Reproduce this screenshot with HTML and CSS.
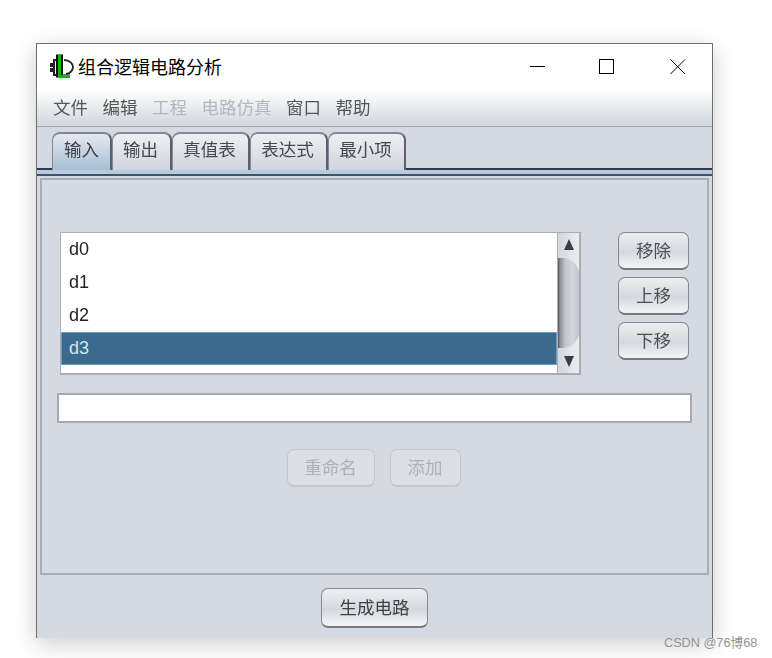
FILE: index.html
```html
<!DOCTYPE html>
<html lang="zh">
<head>
<meta charset="utf-8">
<title>组合逻辑电路分析</title>
<link rel="stylesheet" href="styles.css">
</head>
<body>
<div class="window">
  <header class="titlebar">
    <svg class="appicon" width="24" height="25" viewBox="0 0 24 25">
      <path d="M7 6H4V10H0V12H4V15H0V17H4V21H7" fill="none" stroke="#222" stroke-width="2"/>
      <path d="M14 6C20 6 23 10 23 13C23 16 20 20 16 20" fill="none" stroke="#222" stroke-width="1.800"/>
      <path d="M7 0.500V23.500" stroke="#111" stroke-width="2" fill="none"/>
      <path d="M10 0.500H13V20.500H20V24H8V0.500Z" fill="#111"/>
      <path d="M9.500 1V22.500H20" fill="none" stroke="#00c000" stroke-width="3"/>
    </svg>
    <span class="apptitle">组合逻辑电路分析</span>
    <div class="controls">
      <svg width="16" height="16" viewBox="0 0 16 16"><path d="M0 7.500H15" stroke="#000" fill="none"/></svg>
      <svg width="16" height="16" viewBox="0 0 16 16"><rect x="0.500" y="0.500" width="14" height="14" stroke="#000" fill="none"/></svg>
      <svg class="close" width="16" height="16" viewBox="0 0 16 16"><path d="M0.500 0.500L15 15M15 0.500L0.500 15" stroke="#000" fill="none"/></svg>
    </div>
  </header>
  <nav class="menubar">
    <span class="menu">文件</span>
    <span class="menu">编辑</span>
    <span class="menu off">工程</span>
    <span class="menu off">电路仿真</span>
    <span class="menu">窗口</span>
    <span class="menu">帮助</span>
  </nav>
  <div class="tabs">
    <span class="tab current"><span class="label">输入</span></span>
    <span class="tab t1"><span class="label">输出</span></span>
    <span class="tab t2"><span class="label">真值表</span></span>
    <span class="tab t2"><span class="label">表达式</span></span>
    <span class="tab t2"><span class="label">最小项</span></span>
  </div>
  <div class="strip"></div>
  <main class="panel">
    <div class="listrow">
      <div class="list">
        <ul class="rows">
          <li class="row">d0</li>
          <li class="row">d1</li>
          <li class="row">d2</li>
          <li class="row selected">d3</li>
        </ul>
        <div class="scroll">
          <span class="arrow up"></span>
          <span class="thumb"></span>
          <span class="arrow down"></span>
        </div>
      </div>
      <div class="side">
        <button class="btn side-btn"><span class="label">移除</span></button>
        <button class="btn side-btn"><span class="label">上移</span></button>
        <button class="btn side-btn"><span class="label">下移</span></button>
      </div>
    </div>
    <input class="field" type="text" aria-label="名称">
    <div class="actions">
      <button class="btn disabled rename"><span class="label">重命名</span></button>
      <button class="btn disabled add"><span class="label">添加</span></button>
    </div>
  </main>
  <footer class="footer">
    <button class="btn build"><span class="label">生成电路</span></button>
  </footer>
</div>
<div class="watermark">CSDN @76博68</div>
</body>
</html>
```

FILE: styles.css
```css
* { box-sizing: border-box; }
html, body { margin: 0; padding: 0; background: #fff; }
body {
  width: 772px;
  height: 658px;
  padding: 43px 0 0 36px;
  overflow: hidden;
  position: relative;
  font-family: "Noto Sans CJK SC", "Liberation Sans", sans-serif;
}
.window {
  width: 677px;
  height: 595px;
  background: #d5d9e1;
  border: 1px solid #6e6e6e;
  border-bottom: 0;
  box-shadow: 0 6px 22px rgba(0, 0, 0, .2);
}
.titlebar {
  height: 47px;
  background: #fff;
  display: flex;
  align-items: center;
  padding: 0 0 2px 13px;
}
.appicon { flex: none; }
.apptitle {
  margin-left: 4px;
  font-size: 18px;
  color: #000;
  line-height: 24px;
  padding-bottom: 2px;
}
.controls {
  margin-left: auto;
  display: flex;
  gap: 53px;
  padding-right: 26px;
}
.controls svg { display: block; }
.controls .close { margin-left: 2px; }
.menubar {
  height: 36px;
  background: linear-gradient(#fbfcfb 0%, #f3f4f4 25%, #d5d9e1 90%);
  border-bottom: 1px solid #a5a8b0;
  display: flex;
  align-items: center;
  padding: 0 0 4px 16px;
  gap: 14.500px;
}
.menu {
  font-size: 17.500px;
  color: #55565a;
  filter: blur(.45px);
}
.menu.off { color: #b4b7bd; }
.tabs {
  display: flex;
  padding: 5px 0 0 15px;
  height: 43px;
  margin-bottom: -2px;
  position: relative;
  z-index: 1;
}
.tab {
  height: 38px;
  border: 2px solid #59606f;
  border-color: #80889a #59606f transparent #80889a;
  border-left-width: 1px;
  border-bottom: 0;
  border-radius: 8px 8px 0 0;
  background: linear-gradient(#eeeff2, #d2d4dc);
  text-align: center;
  padding-right: 2px;
  font-size: 17.500px;
  line-height: 30px;
  color: #47484c;
}
.label { display: inline-block; filter: blur(.45px); }
.tab.t1 { width: 60px; }
.tab.t2 { width: 78px; }
.tab.current {
  width: 60px;
  padding-right: 0;
  background: linear-gradient(#e3e6ec 5%, #a9c0d5 95%);
  color: #3c4048;
}
.strip {
  height: 8px;
  background: #b4cbe0;
  border-top: 2px solid #333a4c;
  border-bottom: 2px solid #4a5063;
}
.panel {
  margin: 2px 3px 0;
  height: 397px;
  border: 2px solid #a9adb7;
  padding: 52px 15px 0;
}
.listrow {
  display: flex;
  padding: 0 3px;
  gap: 37px;
}
.list {
  width: 521px;
  height: 143px;
  display: flex;
  background: #fff;
  border: 2px solid #a9adb7;
  border-width: 1px 2px 2px 1px;
}
.rows {
  list-style: none;
  margin: 0;
  padding: 0;
  flex: 1;
  background: #fff;
}
.row {
  height: 33px;
  padding-left: 8px;
  font: 18px/33px "Liberation Sans", sans-serif;
  color: #222;
  filter: blur(.3px);
}
.row.selected {
  background: #3a6b8e;
  border: 1px solid #6f9cc1;
  color: #d6e2ec;
  padding-left: 7px;
  line-height: 31px;
  filter: none;
}
.scroll {
  width: 22px;
  border-left: 1px solid #a9adb7;
  background: linear-gradient(90deg, #d3d6dd, #eceef1);
  display: flex;
  flex-direction: column;
  align-items: center;
}
.arrow {
  width: 0;
  height: 0;
  border-left: 5px solid transparent;
  border-right: 5px solid transparent;
  flex: none;
}
.arrow.up { border-bottom: 11px solid #3a3d46; margin-top: 6px; }
.arrow.down { border-top: 11px solid #3a3d46; margin-top: 8px; }
.thumb {
  width: 21px;
  height: 90px;
  margin-top: 8px;
  flex: none;
  border-radius: 0 16px 16px 0;
  background: linear-gradient(90deg, #55565c 0, #8e9097 10%, #c4c6cc 35%, #d6d7db 70%, #c2c4ca 100%);
  align-self: flex-start;
}
.side {
  width: 71px;
  display: flex;
  flex-direction: column;
  gap: 7px;
}
.btn {
  display: block;
  padding: 0 0 2px;
  border: 1px solid #85888f;
  border-bottom: 2px solid #77797f;
  border-radius: 7px;
  background: linear-gradient(#edeef1 0%, #d6d8de 55%, #f4f5f7 100%);
  font-family: "Noto Sans CJK SC", "Liberation Sans", sans-serif;
  font-size: 17.500px;
  color: #4e4f53;
}
.side-btn { width: 71px; height: 38px; }
.field {
  display: block;
  width: 635px;
  height: 30px;
  margin: 18px 0 0;
  padding: 0;
  background: #fff;
  border: 2px solid #a7abb5;
  border-radius: 0;
  outline: none;
}
.actions {
  margin-top: 26px;
  display: flex;
  justify-content: center;
  gap: 15px;
  padding-right: 2px;
}
.btn.disabled {
  height: 38px;
  border-color: #c4c7cf;
  background: #dcdee4;
  color: #aeb1b8;
}
.rename { width: 88px; }
.add { width: 71px; }
.footer {
  display: flex;
  justify-content: center;
  padding-top: 13px;
}
.build { width: 107px; height: 40px; color: #3f4044; }
.watermark {
  position: absolute;
  left: 664px;
  top: 634px;
  font: 12.700px/18px "Liberation Sans", "Noto Sans CJK SC", sans-serif;
  color: #939393;
  white-space: nowrap;
}
```
